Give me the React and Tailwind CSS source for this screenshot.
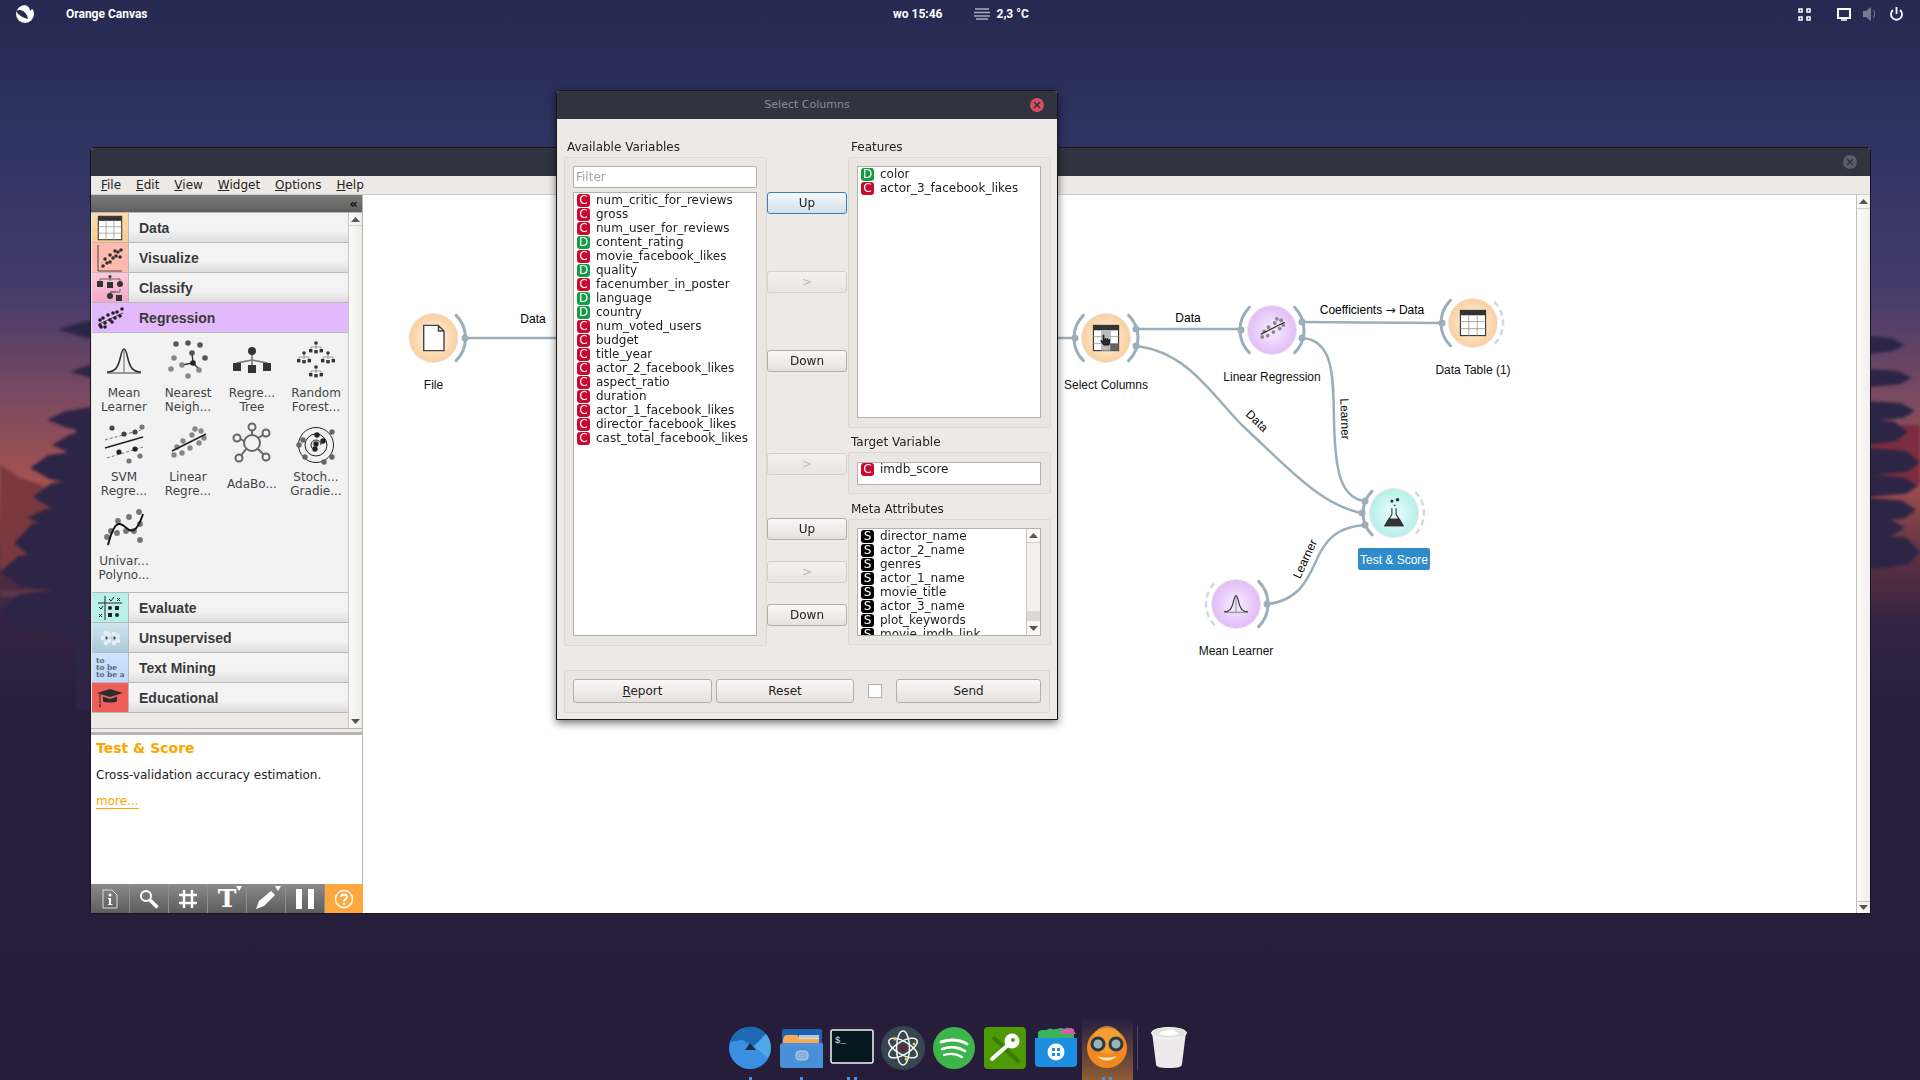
import React from "react";
import { FaHandPointer } from "react-icons/fa";

const DJ = "[font-family:'DejaVu_Sans',sans-serif]";

/* ---------- wallpaper ---------- */
const leftBranches = [[58, 330, 8], [70, 372, 8], [47, 420, 11], [52, 445, 13], [30, 468, 16], [33, 497, 17], [27, 518, 11], [14, 543, 24], [0, 572, 20], [0, 612, 22]];
const rightBranches = [[1905, 345, 9], [1912, 378, 9], [1915, 411, 10], [1908, 432, 13], [1920, 462, 14], [1918, 486, 11], [1916, 510, 12], [1905, 528, 10], [1920, 552, 18]];

function Wallpaper() {
  return (
    <svg className="absolute inset-0" width="1920" height="1080" viewBox="0 0 1920 1080">
      <defs>
        <linearGradient id="sky" x1="0" y1="0" x2="0" y2="1">
          <stop offset="0" stopColor="#262950" />
          <stop offset="0.14" stopColor="#2f3463" />
          <stop offset="0.278" stopColor="#473c6c" />
          <stop offset="0.37" stopColor="#7b4a60" />
          <stop offset="0.444" stopColor="#a25250" />
          <stop offset="0.519" stopColor="#5a2f40" />
          <stop offset="0.574" stopColor="#352443" />
          <stop offset="0.648" stopColor="#271f3c" />
          <stop offset="1" stopColor="#251d3a" />
        </linearGradient>
      </defs>
      <rect width="1920" height="1080" fill="url(#sky)" />
      <g className="blur-[1.5px]">
        <rect x="1870" y="425" width="50" height="60" fill="#7c2d40" />
        <polygon points="0,465 20,478 50,488 90,500 90,570 0,570" fill="#79393f" />
        <rect x="0" y="590" width="80" height="7" fill="#6b3a50" opacity="0.7" />
        <rect x="76" y="410" width="16" height="300" fill="#2d2545" />
        {leftBranches.map(([x, y, h]) => (
          <polygon key={y} points={`${x},${y} ${x + 18},${y - h * 0.8} 92,${y - h * 1.2} 92,${y + h * 1.2} ${x + 20},${y + h * 0.7}`} fill="#2d2545" />
        ))}
        {rightBranches.map(([x, y, h]) => (
          <polygon key={y} points={`${x},${y} ${x - 14},${y - h * 0.8} 1868,${y - h} 1868,${y + h} ${x - 12},${y + h * 0.7}`} fill="#2d2545" />
        ))}
      </g>
    </svg>
  );
}

/* ---------- small drawn icons (viewBox 40) ---------- */
const Dots = ({ pts, fill = "#777", r = 2.4 }) => pts.map(([x, y], i) => <circle key={i} cx={x} cy={y} r={r} fill={fill} />);

const GaussIcon = () => (
  <g>
    <path d="M3 32H37" stroke="#999" strokeWidth="2" />
    <path d="M20 8V32" stroke="#999" strokeWidth="1.6" />
    <path d="M3 31C11 31 14 27 16.500 16C18 9 19 8 20 8C21 8 22 9 23.500 16C26 27 29 31 37 31" fill="none" stroke="#333" strokeWidth="1.6" />
  </g>
);
const KnnIcon = () => (
  <g>
    <path d="M24 12L25 22L14 24M25 22L31 28" stroke="#333" strokeWidth="1.4" fill="none" />
    <Dots pts={[[8, 3], [20, 2], [32, 4], [24, 12], [37, 17]]} fill="#555" r="2.8" />
    <Dots pts={[[6, 17], [14, 24], [31, 29], [3, 28], [20, 35]]} fill="#888" r="2.8" />
    <circle cx="25" cy="22" r="2.8" fill="#222" />
  </g>
);
const TreeIcon = () => (
  <g fill="#333">
    <path d="M20 10V30M5 26V22L20 19L35 22V26" stroke="#777" strokeWidth="1.6" fill="none" />
    <circle cx="20" cy="10" r="4" />
    <rect x="1" y="22" width="8" height="8" />
    <rect x="16" y="24" width="8" height="8" />
    <rect x="31" y="22" width="8" height="8" />
  </g>
);
const Mini = ({ x, y }) => (
  <g fill="#333">
    <path d={`M${x} ${y}V${y + 6}M${x - 5} ${y + 7}V${y + 4}H${x + 5}V${y + 7}`} stroke="#888" strokeWidth="0.8" fill="none" />
    <circle cx={x} cy={y} r="1.8" />
    <rect x={x - 7} y={y + 6} width="3.4" height="3.4" />
    <rect x={x - 1.700} y={y + 7} width="3.4" height="3.4" />
    <rect x={x + 3.600} y={y + 6} width="3.4" height="3.4" />
  </g>
);
const ForestIcon = () => (
  <g>
    <Mini x={20} y={2} />
    <Mini x={8} y={12} />
    <Mini x={32} y={12} />
    <Mini x={20} y={26} />
  </g>
);
const SvmIcon = () => (
  <g>
    <path d="M1 23L39 12" stroke="#222" strokeWidth="1.6" />
    <path d="M1 15L37 5M3 33L39 22" stroke="#666" strokeWidth="0.9" strokeDasharray="3 2" />
    <Dots pts={[[8, 3], [20, 9], [31, 7]]} fill="#444" r="2.6" />
    <Dots pts={[[15, 27], [31, 24]]} fill="#222" r="2.6" />
    <Dots pts={[[25, 36], [36, 31], [38, 2]]} fill="#777" r="2.6" />
  </g>
);
const LinearIcon = ({ dark = "#222", fill = "#888" }) => (
  <g>
    <Dots pts={[[9, 22], [15, 16], [24, 10], [33, 6], [31, 18], [22, 23], [14, 28], [6, 30], [36, 13], [27, 4]]} fill={fill} r="2.7" />
    <path d="M4 26L38 9" stroke={dark} strokeWidth="1.7" />
  </g>
);
const AdaIcon = () => (
  <g fill="none" stroke="#666" strokeWidth="2">
    <circle cx="20" cy="18" r="8" />
    <circle cx="20" cy="2" r="3.500" />
    <circle cx="34" cy="8" r="3.500" />
    <circle cx="5" cy="13" r="3.500" />
    <circle cx="7" cy="33" r="3.500" />
    <circle cx="34" cy="32" r="3.500" />
    <path d="M20 6V10M31 10L26 13M8.500 14L12 16M9.500 30L14 24M31.500 29.500L26 24" />
  </g>
);
const SgdIcon = () => (
  <g>
    <circle cx="20" cy="20" r="17.500" fill="none" stroke="#222" strokeWidth="1" />
    <circle cx="20" cy="20" r="11" fill="none" stroke="#222" strokeWidth="1" />
    <path d="M20 25a5 5 0 1 1 5-5" fill="none" stroke="#222" strokeWidth="1" />
    <Dots pts={[[21, 10], [27, 16], [20, 19], [19, 24]]} fill="#222" r="2.7" />
    <Dots pts={[[7, 15], [3, 20], [36, 7], [9, 32], [28, 37], [36, 32]]} fill="#666" r="2.7" />
  </g>
);
const PolyIcon = () => (
  <g>
    <Dots pts={[[14, 12], [25, 8], [35, 3], [7, 22], [13, 24], [22, 22], [30, 22], [36, 15], [3, 28], [36, 31]]} fill="#777" r="2.9" />
    <path d="M4 36C7 24 11 14 16 15C22 16 24 24 30 21C35 18 37 11 39 5" fill="none" stroke="#111" strokeWidth="1.900" />
  </g>
);
const TableIcon = ({ head = "#333" }) => (
  <g>
    <rect x="2" y="2" width="36" height="36" fill="#fff" stroke="#333" strokeWidth="1.6" />
    <rect x="2" y="2" width="36" height="7" fill={head} />
    <path d="M14 9V38M26 9V38M2 18H38M2 28H38" stroke="#999" strokeWidth="1.2" />
  </g>
);

/* ---------- sidebar ---------- */
const catIcons = {
  Data: (
    <svg width="26" height="26" viewBox="0 0 40 40"><TableIcon /></svg>
  ),
  Visualize: (
    <svg width="26" height="28" viewBox="0 0 26 28">
      <path d="M1 1V27H25" fill="none" stroke="#444" strokeWidth="1" />
      <Dots pts={[[6, 22], [10, 19], [8, 15], [13, 18], [16, 14], [19, 12], [13, 11], [21, 8], [24, 6], [18, 7], [23, 13]]} fill="#333" r="1.800" />
    </svg>
  ),
  Classify: (
    <svg width="28" height="26" viewBox="0 0 28 26">
      <path d="M4 6V4H24V6M14 1V6M24 14V17H14V20M14 17H20" stroke="#666" fill="none" />
      <circle cx="14" cy="1.500" r="1.500" fill="#333" />
      <rect x="1" y="6" width="6" height="6" fill="#333" />
      <rect x="11" y="7" width="6" height="6" fill="#333" />
      <circle cx="24" cy="9" r="3" fill="#333" />
      <circle cx="14" cy="21" r="3" fill="#333" />
      <rect x="20" y="20" width="6" height="6" fill="#333" />
    </svg>
  ),
  Regression: (
    <svg width="26" height="22" viewBox="0 0 26 22">
      <path d="M1 17L25 6" stroke="#222" strokeWidth="0.800" />
      <Dots pts={[[2, 13], [5, 11], [10, 8], [15, 6], [19, 5], [24, 2], [22, 9], [17, 11], [12, 13], [7, 16], [2, 18], [7, 20], [14, 15], [3, 20]]} fill="#222" r="1.800" />
    </svg>
  ),
  Evaluate: (
    <svg width="26" height="26" viewBox="0 0 26 26">
      <path d="M8 1V25M1 8H25" stroke="#222" strokeWidth="1" fill="none" />
      <path d="M12 4L14 6L17 2M20 3L23 6M23 3L20 6M2 12L4 14L6 11M2 19L5 22M5 19L2 22" stroke="#222" fill="none" />
      <circle cx="13" cy="13" r="2" fill="#222" />
      <rect x="18" y="11" width="4" height="4" fill="#222" />
      <rect x="11" y="18" width="4" height="4" fill="#222" />
      <circle cx="20" cy="20" r="2" fill="#222" />
    </svg>
  ),
  Unsupervised: (
    <svg width="20" height="16" viewBox="0 0 20 16">
      <Dots pts={[[3, 8], [6, 3], [6, 13], [9, 5], [9, 11], [14, 4], [18, 6], [18, 11], [14, 13]]} fill="#e4eef4" r="2.400" />
      <path d="M5 8H8M6.500 6.500V9.500M13 8H16M14.500 6.500V9.500" stroke="#555" />
    </svg>
  ),
  "Text Mining": (
    <div className="flex w-[28px] flex-col whitespace-nowrap text-[7.5px] font-bold leading-[7px] text-[#55667f] [font-family:'DejaVu_Serif',serif]">
      <span>to</span>
      <span>to be</span>
      <span>to be a</span>
    </div>
  ),
  Educational: (
    <svg width="26" height="18" viewBox="0 0 26 18">
      <path d="M0 4L13 0L26 4L13 8Z" fill="#2c2c2c" />
      <path d="M6 7.500V12C6 14 20 14 20 12V7.500L13 10Z" fill="#2c2c2c" />
      <path d="M3 5V14" stroke="#2c2c2c" />
      <path d="M2 18L3 13L4 18Z" fill="#2c2c2c" />
    </svg>
  ),
};

function Category({ name, bg, active }) {
  return (
    <div className={`flex h-[30px] shrink-0 border-b border-[#b9b9b9] ${active ? "bg-[#e2b9fa]" : "bg-gradient-to-b from-[#f3f3f3] from-60% to-[#dedede]"}`}>
      <div className={`flex w-[37px] shrink-0 items-center justify-center ${bg} ${active ? "" : "border-r border-[#b9b9b9]"}`}>{catIcons[name]}</div>
      <span className="ml-[10px] self-center pt-[1px] text-[14px] font-bold text-[#3a3a3a] [font-family:'Liberation_Sans',sans-serif]">{name}</span>
    </div>
  );
}

const tools = [
  [["Mean", "Learner"], GaussIcon],
  [["Nearest", "Neigh..."], KnnIcon],
  [["Regre...", "Tree"], TreeIcon],
  [["Random", "Forest..."], ForestIcon],
  [["SVM", "Regre..."], SvmIcon],
  [["Linear", "Regre..."], LinearIcon],
  [["AdaBo..."], AdaIcon],
  [["Stoch...", "Gradie..."], SgdIcon],
  [["Univar...", "Polyno..."], PolyIcon],
];

function Tool({ lines, Icon }) {
  return (
    <div className="flex h-[84px] w-[64px] flex-col items-center pt-[8px]">
      <svg width="40" height="40" viewBox="0 0 40 40" className="shrink-0 overflow-visible"><Icon /></svg>
      <div className="mt-[5px] flex h-[28px] flex-col justify-center text-center text-[12px] leading-[14px] whitespace-nowrap text-[#444]">
        {lines.map((l) => <span key={l}>{l}</span>)}
      </div>
    </div>
  );
}

const Arrow = ({ down, color = "#555" }) => (
  <svg width="9" height="5" viewBox="0 0 9 5"><path d={down ? "M0 0H9L4.500 5Z" : "M0 5H9L4.500 0Z"} fill={color} /></svg>
);

function Sidebar() {
  return (
    <div className={`flex h-full w-[272px] shrink-0 flex-col border-r border-[#b5b5b5] bg-[#edeae6] ${DJ}`}>
      <div className="flex h-[17px] shrink-0 items-center justify-end bg-gradient-to-b from-[#7b7b7b] to-[#5f5f5f] pr-[4px]">
        <span className="text-[13px] font-bold leading-none text-[#111]">«</span>
      </div>
      <div className="h-[1px] bg-[#b5b5b5]" />
      <div className="flex h-[516px] shrink-0 border-b border-[#b5b5b5]">
        <div className="ml-[1px] flex w-[257px] shrink-0 flex-col border-r border-[#c9c6c2]">
          <Category name="Data" bg="bg-gradient-to-b from-[#fddcaf] to-[#fbca8c]" />
          <Category name="Visualize" bg="bg-[#ffb9ad]" />
          <Category name="Classify" bg="bg-gradient-to-b from-[#fdc8dc] to-[#f4aac6]" />
          <Category name="Regression" active bg="" />
          <div className="flex h-[260px] shrink-0 flex-wrap content-start border-b border-[#b9b9b9] bg-[#f2f2f2]">
            {tools.map(([l, I]) => <Tool key={l[0]} lines={l} Icon={I} />)}
          </div>
          <Category name="Evaluate" bg="bg-[#b9f1ea]" />
          <Category name="Unsupervised" bg="bg-gradient-to-b from-[#cfe5f1] to-[#a9c9d9]" />
          <Category name="Text Mining" bg="bg-gradient-to-b from-[#cde3fc] to-[#c0d8f6]" />
          <Category name="Educational" bg="bg-[#ee5f5a]" />
        </div>
        <div className="flex w-[13px] shrink-0 flex-col items-center justify-between bg-gradient-to-r from-[#fbfaf8] to-[#f0eeeb] pb-[4px]">
          <div className="flex h-[13px] w-full items-center justify-center border-b border-[#d5d2ce]"><Arrow /></div>
          <Arrow down />
        </div>
      </div>
      <div className="h-[6px] shrink-0 border-b-[3px] border-[#b5b5b5] bg-[#edeae6]" />
      <div className="flex h-[149px] shrink-0 flex-col bg-white pl-[5px] pt-[5px]">
        <span className="text-[14px] font-bold leading-[17px] text-[#ffa500]">Test &amp; Score</span>
        <span className="mt-[11px] text-[12px] leading-[15px] text-[#222]">Cross-validation accuracy estimation.</span>
        <span className="mt-[12px] self-start border-b border-[#ffa500] text-[12px] leading-[13px] text-[#ffa500]">more...</span>
      </div>
      <BottomToolbar />
    </div>
  );
}

function BottomToolbar() {
  const cell = "flex h-full w-[39px] items-center justify-center border-r border-[#8f8f8f]";
  return (
    <div className="mr-[-1px] flex h-[29px] flex-1 bg-gradient-to-b from-[#8a8a8a] to-[#5d5d5d]">
      <div className={cell}>
        <svg width="16" height="20" viewBox="0 0 16 20" fill="none" stroke="#ddd"><path d="M1 1H10L15 6V19H1Z" /><circle cx="8" cy="6" r="1.500" fill="#fff" stroke="none" /><path d="M6 9H9V15H10.500V16H6V15H7V10H6Z" fill="#fff" stroke="none" /></svg>
      </div>
      <div className={cell}>
        <svg width="20" height="20" viewBox="0 0 20 20" fill="none" stroke="#fff"><circle cx="7" cy="7" r="5" strokeWidth="2" /><path d="M11 11L18.500 18.500" strokeWidth="3.500" /></svg>
      </div>
      <div className={cell}>
        <svg width="20" height="20" viewBox="0 0 20 20" stroke="#fff" strokeWidth="2.500"><path d="M6 1V19M14 1V19M1 6H19M1 14H19" /></svg>
      </div>
      <div className={`${cell} relative`}>
        <span className="text-[25px] font-bold leading-none text-white [font-family:'DejaVu_Serif',serif]">T</span>
        <svg className="absolute right-[4px] top-[2px]" width="6" height="5" viewBox="0 0 6 5"><path d="M0 0H6L3 5Z" fill="#fff" /></svg>
      </div>
      <div className={`${cell} relative`}>
        <svg width="22" height="22" viewBox="0 0 22 22" fill="#fff"><path d="M1 21L4 13L16 3L20 7L9 18Z" /></svg>
        <svg className="absolute right-[4px] top-[2px]" width="6" height="5" viewBox="0 0 6 5"><path d="M0 0H6L3 5Z" fill="#fff" /></svg>
      </div>
      <div className={`${cell} gap-[6px]`}>
        <div className="h-[20px] w-[6px] bg-white" />
        <div className="h-[20px] w-[6px] bg-white" />
      </div>
      <div className="flex h-full w-[38px] items-center justify-center bg-[#ffa63d]">
        <svg width="20" height="20" viewBox="0 0 20 20" fill="none" stroke="#fff"><circle cx="10" cy="10" r="8.500" strokeWidth="1.600" /><path d="M7 8C7 4.500 13 4.500 13 8C13 10 10 10 10 12.500" strokeWidth="2" /><circle cx="10" cy="15" r="1.200" fill="#fff" stroke="none" /></svg>
      </div>
    </div>
  );
}

/* ---------- canvas ---------- */
const pol = (cx, cy, r, a) => [cx + r * Math.cos((a * Math.PI) / 180), cy + r * Math.sin((a * Math.PI) / 180)];
const arc = (cx, cy, r, a1, a2) => {
  const [x1, y1] = pol(cx, cy, r, a1);
  const [x2, y2] = pol(cx, cy, r, a2);
  return `M${x1} ${y1}A${r} ${r} 0 0 1 ${x2} ${y2}`;
};

const O = ["#fff0df", "#fbcf9c"];
const P = ["#f3e2fd", "#e3bcf8"];
const T = ["#dffaf7", "#b5efea"];

const SelectIcon = () => (
  <g>
    <TableIcon />
    <rect x="14" y="9" width="12" height="29" fill="#bbb" />
    <rect x="26" y="28" width="12" height="10" fill="#666" />
    <FaHandPointer x="11" y="15" width="26" height="26" color="#222" />
  </g>
);
const FileIcon = () => (
  <path d="M6 2H27L35 10V38H6Z M27 2V10H35" fill="#fff" stroke="#444" strokeWidth="2" />
);
const FlaskIcon = () => (
  <g fill="#333">
    <path d="M16 14H17V22L7 38H33L23 22V14H24V14" stroke="#333" strokeWidth="1.600" fill="none" />
    <path d="M12 28H28L34 39H6Z" />
    <circle cx="17" cy="3" r="2.200" />
    <circle cx="25" cy="1" r="2.600" />
    <circle cx="21" cy="9" r="1.200" />
  </g>
);

const nodes = [
  { x: 433.5, y: 338, c: O, icon: FileIcon, label: "File", right: "solid", ly: 385 },
  { x: 1106, y: 338, c: O, icon: SelectIcon, label: "Select Columns", left: "solid", right: "solid", ly: 385 },
  { x: 1272, y: 330, c: P, icon: () => <LinearIcon />, label: "Linear Regression", left: "solid", right: "solid", ly: 377 },
  { x: 1473, y: 323, c: O, icon: () => <TableIcon />, label: "Data Table (1)", left: "solid", right: "dash", ly: 370 },
  { x: 1394, y: 513, c: T, icon: FlaskIcon, label: "Test & Score", left: "solid", right: "dash", selected: true, ly: 559 },
  { x: 1236, y: 604, c: P, icon: GaussIcon, label: "Mean Learner", left: "dash", right: "solid", ly: 651 },
];

const anchors = [[465, 338], [1075, 338], [1136, 329], [1136, 346], [1241, 330], [1302, 322], [1302, 338], [1442, 323], [1365, 501], [1362, 513], [1365, 525], [1267, 604]];

const wires = [
  "M465 338H560",
  "M1050 338H1075",
  "M1136 329H1241",
  "M1302 322L1442 323",
  "M1136 346C1190 352 1215 400 1245 428C1285 465 1320 505 1362 513",
  "M1302 338C1335 340 1333 380 1334 420C1335 470 1340 498 1365 501",
  "M1267 604C1310 600 1312 560 1325 545C1335 530 1350 526 1365 525",
];

function Canvas() {
  return (
    <div className="relative h-full flex-1 overflow-hidden bg-white [font-family:'Liberation_Sans',sans-serif]">
      <svg className="absolute inset-0" width="1493" height="718" viewBox="363 195 1493 718">
        <defs>
          {[["gO", O], ["gP", P], ["gT", T]].map(([id, c]) => (
            <radialGradient key={id} id={id}>
              <stop offset="0.25" stopColor={c[0]} />
              <stop offset="1" stopColor={c[1]} />
            </radialGradient>
          ))}
        </defs>
        {wires.map((d) => <path key={d} d={d} fill="none" stroke="#9caeb9" strokeWidth="2.500" />)}
        {nodes.map((n) => {
          const id = n.c === O ? "gO" : n.c === P ? "gP" : "gT";
          const Ic = n.icon;
          const small = n.label === "Test & Score";
          return (
            <g key={n.label}>
              <circle cx={n.x} cy={n.y} r="25" fill="#e9e9e9" />
              <circle cx={n.x} cy={n.y} r="24" fill={`url(#${id})`} />
              <svg x={n.x - 14} y={n.y - 14} width="28" height="28" viewBox="0 0 40 40" overflow="visible"><Ic /></svg>
              {n.right === "solid" && <path d={arc(n.x, n.y, 32, -45, 45)} fill="none" stroke="#9caeb9" strokeWidth="3" strokeLinecap="round" />}
              {n.right === "dash" && <path d={arc(n.x, n.y, 30, -45, 45)} fill="none" stroke="#cfdadf" strokeWidth="2.500" strokeDasharray="6 4" />}
              {n.left === "solid" && <path d={arc(n.x, n.y, small ? 31 : 32, 135, 225)} fill="none" stroke="#9caeb9" strokeWidth="3" strokeLinecap="round" />}
              {n.left === "dash" && <path d={arc(n.x, n.y, 30, 135, 225)} fill="none" stroke="#cfdadf" strokeWidth="2.500" strokeDasharray="6 4" />}
            </g>
          );
        })}
        {anchors.map(([x, y]) => <circle key={`${x}-${y}`} cx={x} cy={y} r="3.500" fill="#9caeb9" />)}
      </svg>
      {nodes.map((n) => (
        <div
          key={n.label}
          className={`absolute -translate-x-1/2 -translate-y-1/2 whitespace-nowrap text-[12px] leading-[14px] ${n.selected ? "rounded-[2px] bg-[#2f8ccb] px-[2px] pb-[3px] pt-[5px] text-white" : "text-[#111]"}`}
          style={{ left: n.x - 363, top: n.ly - 195 }}
        >
          {n.label}
        </div>
      ))}
      <span className="absolute left-[170px] top-[124px] -translate-x-1/2 -translate-y-1/2 text-[12px] text-black">Data</span>
      <span className="absolute left-[825px] top-[123px] -translate-x-1/2 -translate-y-1/2 text-[12px] text-black">Data</span>
      <span className="absolute left-[1009px] top-[115px] -translate-x-1/2 -translate-y-1/2 whitespace-nowrap text-[12px] text-black">Coefficients <span className="[font-family:'DejaVu_Sans',sans-serif]">→</span> Data</span>
      <span className="absolute left-[894px] top-[226px] -translate-x-1/2 -translate-y-1/2 rotate-[44deg] text-[12px] text-black">Data</span>
      <span className="absolute left-[982px] top-[224px] -translate-x-1/2 -translate-y-1/2 rotate-[88deg] text-[12px] text-black">Learner</span>
      <span className="absolute left-[942px] top-[364px] -translate-x-1/2 -translate-y-1/2 rotate-[-65deg] text-[12px] text-black">Learner</span>
    </div>
  );
}

function MainWindow() {
  const menu = [["F", "ile"], ["E", "dit"], ["V", "iew"], ["W", "idget"], ["O", "ptions"], ["H", "elp"]];
  return (
    <div className="absolute left-[90px] top-[147px] flex h-[767px] w-[1781px] flex-col overflow-hidden rounded-t-[3px] border border-[#15171d] bg-white">
      <div className="flex h-[28px] shrink-0 items-center justify-end bg-[#2f343f] pr-[13px]">
        <div className="flex h-[14px] w-[14px] items-center justify-center rounded-full bg-[#5a5e68]">
          <svg width="8" height="8" viewBox="0 0 8 8" stroke="#2f343f" strokeWidth="1.500"><path d="M1 1L7 7M7 1L1 7" /></svg>
        </div>
      </div>
      <div className={`flex h-[19px] shrink-0 items-center gap-[15px] border-b border-[#cfccc8] bg-[#edeae6] pl-[10px] text-[12px] text-[#222] ${DJ}`}>
        {menu.map(([a, b]) => (
          <span key={a}><span className="underline">{a}</span>{b}</span>
        ))}
      </div>
      <div className="flex min-h-0 flex-1">
        <Sidebar />
        <Canvas />
        <div className="flex h-full w-[14px] shrink-0 flex-col items-center justify-between border-l border-[#c3c0bc] bg-gradient-to-r from-[#fcfbfa] to-[#f1efec]">
          <div className="flex h-[14px] w-full items-center justify-center border-b border-[#d5d2ce]"><Arrow /></div>
          <div className="flex h-[12px] w-full items-center justify-center border-t border-[#c3c0bc]"><Arrow down /></div>
        </div>
      </div>
    </div>
  );
}

/* ---------- dialog ---------- */
const badgeColor = { C: "bg-[#c9082f]", D: "bg-[#169b45]", S: "bg-black" };

function VarRow({ t, name, cls = "" }) {
  return (
    <div className={`flex h-[14px] shrink-0 items-center ${cls}`}>
      <span className={`ml-[3px] flex h-[13px] w-[13px] shrink-0 items-center justify-center rounded-[3px] text-[12px] leading-none text-white ${badgeColor[t]}`}>{t}</span>
      <span className="ml-[6px] whitespace-nowrap text-[12px] leading-[14px] text-[#222]">{name}</span>
    </div>
  );
}

const avail = [
  ["C", "num_critic_for_reviews"], ["C", "gross"], ["C", "num_user_for_reviews"], ["D", "content_rating"], ["C", "movie_facebook_likes"], ["D", "quality"],
  ["C", "facenumber_in_poster"], ["D", "language"], ["D", "country"], ["C", "num_voted_users"], ["C", "budget"], ["C", "title_year"], ["C", "actor_2_facebook_likes"],
  ["C", "aspect_ratio"], ["C", "duration"], ["C", "actor_1_facebook_likes"], ["C", "director_facebook_likes"], ["C", "cast_total_facebook_likes"],
];
const metas = ["director_name", "actor_2_name", "genres", "actor_1_name", "movie_title", "actor_3_name", "plot_keywords", "movie_imdb_link"];

function Btn({ children, cls = "", disabled, primary }) {
  return (
    <div
      className={`flex h-[22px] w-full items-center justify-center rounded-[3px] border text-[12px] ${cls} ${
        primary
          ? "border-[#3d7fb3] bg-gradient-to-b from-[#f6f9fb] to-[#d2e0ea] text-[#222]"
          : disabled
          ? "border-[#d3d0cb] bg-gradient-to-b from-[#f3f1ee] to-[#e9e6e2] text-[#b8b6b2]"
          : "border-[#b3b0ab] bg-gradient-to-b from-[#f9f8f7] to-[#e5e2de] text-[#222]"
      }`}
    >
      {children}
    </div>
  );
}

const Group = ({ cls, children }) => <div className={`rounded-[2px] border border-[#dcd9d4] bg-[#eae7e3] ${cls}`}>{children}</div>;
const Label = ({ cls = "", children }) => <div className={`h-[15px] pl-[3px] text-[12px] leading-[17px] text-[#222] ${cls}`}>{children}</div>;
const ListBox = ({ cls, children }) => <div className={`flex flex-col overflow-hidden border border-[#b4b1ac] bg-white ${cls}`}>{children}</div>;

function Dialog() {
  return (
    <div className={`absolute left-[556px] top-[90px] flex h-[630px] w-[502px] flex-col overflow-hidden rounded-t-[3px] border border-[#15171d] bg-[#edeae6] shadow-[0_3px_8px_rgba(0,0,0,0.55)] ${DJ}`}>
      <div className="relative flex h-[28px] shrink-0 items-center justify-center bg-[#2f343f] text-[11px] text-[#8a8e96]">
        Select Columns
        <div className="absolute right-[13px] top-[7px] flex h-[14px] w-[14px] items-center justify-center rounded-full bg-[#d6515c]">
          <svg width="8" height="8" viewBox="0 0 8 8" stroke="#2f343f" strokeWidth="1.500"><path d="M1 1L7 7M7 1L1 7" /></svg>
        </div>
      </div>
      <div className="flex flex-1 flex-col px-[7px]">
        <div className="mt-[20px] flex">
          <div className="w-[203px] shrink-0">
            <Label>Available Variables</Label>
            <Group cls="mt-[3px] flex h-[489px] flex-col gap-[4px] pl-[8px] pr-[9px] pt-[8px]">
              <div className="flex h-[22px] items-center rounded-[2px] border border-[#b4b1ac] bg-white pl-[2px] text-[12px] text-[#a5a5a5]">Filter</div>
              <ListBox cls="h-[444px]">
                {avail.map(([t, n]) => <VarRow key={n} t={t} name={n} />)}
              </ListBox>
            </Group>
          </div>
          <div className="w-[80px] shrink-0 pt-[53px]">
            <Btn primary>Up</Btn>
            <Btn disabled cls="mt-[57px]">&gt;</Btn>
            <Btn cls="mt-[57px]">Down</Btn>
            <Btn disabled cls="mt-[81px]">&gt;</Btn>
            <Btn cls="mt-[43px]">Up</Btn>
            <Btn disabled cls="mt-[21px]">&gt;</Btn>
            <Btn cls="mt-[21px]">Down</Btn>
          </div>
          <div className="ml-[1px] w-[203px] shrink-0">
            <Label>Features</Label>
            <Group cls="mt-[3px] h-[271px] pl-[8px] pr-[9px] pt-[8px]">
              <ListBox cls="h-[252px]">
                <VarRow t="D" name="color" />
                <VarRow t="C" name="actor_3_facebook_likes" />
              </ListBox>
            </Group>
            <Label cls="mt-[6px]">Target Variable</Label>
            <Group cls="mt-[3px] h-[42px] pl-[8px] pr-[9px] pt-[9px]">
              <ListBox cls="h-[23px]">
                <VarRow t="C" name="imdb_score" cls="-mt-[1px]" />
              </ListBox>
            </Group>
            <Label cls="mt-[7px]">Meta Attributes</Label>
            <Group cls="mt-[3px] h-[126px] pl-[8px] pr-[9px] pt-[8px]">
              <div className="flex h-[108px] overflow-hidden border border-[#b4b1ac] bg-white">
                <div className="flex flex-1 flex-col overflow-hidden">
                  {metas.map((n) => <VarRow key={n} t="S" name={n} />)}
                </div>
                <div className="flex w-[14px] shrink-0 flex-col items-center border-l border-[#c9c6c2] bg-[#f3f1ee]">
                  <div className="flex h-[14px] w-full items-center justify-center border-b border-[#d5d2ce] bg-[#f9f8f7]"><Arrow /></div>
                  <div className="mt-[68px] h-[10px] w-full bg-[#dcdad7]" />
                  <div className="flex h-[14px] w-full items-center justify-center bg-[#f9f8f7]"><Arrow down /></div>
                </div>
              </div>
            </Group>
          </div>
        </div>
        <Group cls="mt-[24px] flex h-[43px] items-start px-[8px] pt-[8px]">
          <Btn cls="!h-[24px] !w-[139px] shrink-0"><span><span className="underline">R</span>eport</span></Btn>
          <Btn cls="!h-[24px] !w-[138px] ml-[4px] shrink-0">Reset</Btn>
          <div className="ml-[14px] mt-[5px] h-[14px] w-[14px] shrink-0 border border-[#b4b1ac] bg-white" />
          <Btn cls="!h-[24px] !w-[145px] ml-[14px] shrink-0">Send</Btn>
        </Group>
      </div>
    </div>
  );
}

/* ---------- dock ---------- */
const D = ({ children, dots = 0, active }) => (
  <div className="relative flex h-[54px] w-[44px] shrink-0 items-start">
    {active && <div className="absolute left-[-3px] top-[-6px] h-[60px] w-[51px] bg-gradient-to-b from-[#2a2040] to-[#8f5c30]" />}
    <svg className="relative" width="44" height="44" viewBox="0 0 44 44">{children}</svg>
    {dots > 0 && (
      <div className="absolute bottom-[0px] left-0 flex w-full justify-center gap-[4px]">
        {Array.from({ length: dots }).map((_, i) => <div key={i} className="h-[3px] w-[3px] bg-[#4f8fe6]" />)}
      </div>
    )}
  </div>
);

function Dock() {
  return (
    <div className="relative flex items-start gap-[7px] pl-[728px]">
      <D dots={1}>
        <circle cx="22" cy="22" r="21" fill="#3b8fe3" />
        <path d="M2 16A21 21 0 0 1 38 8L26 20L14 14Z" fill="#1f68b4" />
        <path d="M26 20L38 8A21 21 0 0 1 40 32C34 26 30 24 26 20Z" fill="#4fa8e8" />
        <path d="M17 24L22 17L28 24Z" fill="#1e2b3f" />
      </D>
      <D dots={1}>
        <rect x="3" y="3" width="40" height="24" fill="#1d64b0" rx="2" />
        <path d="M4 14C4 11 6 9 8 9H18L21 12H40V24H4Z" fill="#f5a855" />
        <rect x="20" y="9" width="20" height="4" fill="#f5f0e8" opacity="0.7" />
        <rect x="1" y="17" width="44" height="25" rx="3" fill="#4a90d9" />
        <rect x="17" y="25" width="12" height="9" rx="3.500" fill="#88b2de" stroke="#b9d2ea" />
      </D>
      <D dots={2}>
        <rect x="1" y="4" width="42" height="33" rx="2" fill="#06181f" stroke="#f4f4f4" strokeWidth="1.500" />
        <text x="5" y="17" fontSize="9" fill="#dfe8ea" fontFamily="Liberation Mono">$_</text>
      </D>
      <D>
        <circle cx="22" cy="22" r="22" fill="#37474f" />
        <g fill="none" stroke="#f4f4f4" strokeWidth="1.500">
          <ellipse cx="22" cy="22" rx="16" ry="6.500" transform="rotate(30 22 22)" />
          <ellipse cx="22" cy="22" rx="16" ry="6.500" transform="rotate(-30 22 22)" />
          <ellipse cx="22" cy="22" rx="6.500" ry="17" />
        </g>
        <circle cx="22" cy="22" r="3" fill="#7b1a3a" />
        <circle cx="14" cy="13" r="1.500" fill="#e8c84b" />
        <circle cx="33" cy="18" r="1.500" fill="#e8c84b" />
        <circle cx="25" cy="33" r="1.500" fill="#e8c84b" />
      </D>
      <D>
        <circle cx="22" cy="22" r="21" fill="#3eb54a" />
        <g fill="none" stroke="#fff" strokeLinecap="round">
          <path d="M9 16C18 13 28 14 35 18" strokeWidth="3" />
          <path d="M10 23C18 20 27 21 33 25" strokeWidth="2.600" />
          <path d="M12 29C18 27 25 28 30 31" strokeWidth="2.200" />
        </g>
      </D>
      <D>
        <rect x="1" y="1" width="42" height="42" rx="4" fill="#4e9a06" />
        <path d="M10 11L36 36" stroke="#3d7a05" strokeWidth="4" />
        <circle cx="29" cy="15" r="7.500" fill="#fff" />
        <circle cx="30" cy="14" r="2" fill="#4e9a06" />
        <path d="M25 19L9 33" stroke="#fff" strokeWidth="4" strokeLinecap="round" />
      </D>
      <D>
        <path d="M4 6C8 2 12 6 16 2C20 6 26 0 30 3C34 0 38 4 40 3V12H4Z" fill="#3bb35a" />
        <path d="M26 4L38 2L42 8H28Z" fill="#d85db0" />
        <path d="M1 12H43V38C43 40 41 41 39 41H5C3 41 1 40 1 38Z" fill="#1c8fe3" />
        <circle cx="22" cy="26" r="8.500" fill="#fff" />
        <path d="M18 22H21V25H18ZM23 22H26V25H23ZM18 27H21V30H18ZM23 27H26V30H23Z" fill="#1c8fe3" />
      </D>
      <D dots={2} active>
        <circle cx="22" cy="22" r="20" fill="#f08a20" />
        <circle cx="22" cy="14" r="14" fill="#f8a838" opacity="0.7" />
        <circle cx="13" cy="18" r="6" fill="#9ab3b8" stroke="#2a3a40" strokeWidth="3" />
        <circle cx="31" cy="18" r="6" fill="#9ab3b8" stroke="#2a3a40" strokeWidth="3" />
        <path d="M12 30C18 36 26 36 32 30C26 32 18 32 12 30Z" fill="#fbe8c0" />
      </D>
      <div className="ml-[1px] h-[44px] w-[1px] bg-[#4c4660]" />
      <svg className="ml-[2px]" width="44" height="44" viewBox="0 0 44 44">
        <path d="M5 6H39L35 38C35 41 31 42 22 42C13 42 9 41 9 38Z" fill="#eceaea" />
        <ellipse cx="22" cy="7" rx="17.500" ry="5.500" fill="#dfe3da" stroke="#fafafa" />
        <path d="M12 8C14 4 18 6 21 4C26 3 30 6 32 8C26 10 18 10 12 8Z" fill="#fff" />
      </svg>
    </div>
  );
}

/* ---------- top panel ---------- */
function TopPanel() {
  return (
    <div className="relative flex h-[28px] shrink-0 items-center text-[12px] font-bold text-white [font-family:Roboto,sans-serif]">
      <svg className="ml-[15px] shrink-0" width="20" height="20" viewBox="0 0 20 20">
        <circle cx="10" cy="10" r="9" fill="#fff" />
        <path d="M1 7C6 4 12 8 13 15C9 14 4 12 1 7ZM10 1C13 2 15 4 15 7L18 4C16 2 13 1 10 1Z" fill="#262950" />
      </svg>
      <span className="ml-[31px] w-[80px] whitespace-nowrap">Orange Canvas</span>
      <span className="ml-[747px] whitespace-nowrap">wo 15:46</span>
      <svg className="ml-[31px]" width="16" height="12" viewBox="0 0 16 12" stroke="#aab" strokeWidth="1.500"><path d="M1 1H15M0 4.500H16M0 8H16M2 11H14" /></svg>
      <span className="ml-[7px] whitespace-nowrap">2,3 °C</span>
      <div className="ml-auto flex items-center pr-[17px]">
        <svg width="13" height="13" viewBox="0 0 13 13" fill="none" stroke="#fff" strokeWidth="1.500"><path d="M1 1H4V4H1ZM9 1H12V4H9ZM1 9H4V12H1ZM9 9H12V12H9Z" /></svg>
        <svg className="ml-[26px]" width="14" height="13" viewBox="0 0 14 13" fill="none" stroke="#fff" strokeWidth="2"><path d="M1 1H13V10H1Z" /><path d="M4 12H10" strokeWidth="1.500" /></svg>
        <svg className="ml-[12px]" width="15" height="14" viewBox="0 0 15 14" fill="#7a7a90"><path d="M0 4H3L8 0V14L3 10H0Z" /><path d="M10 3C12 5 12 9 10 11" fill="none" stroke="#7a7a90" /></svg>
        <svg className="ml-[12px]" width="13" height="14" viewBox="0 0 13 14" fill="none" stroke="#fff" strokeWidth="1.800"><path d="M6.500 0V7M3 3A5.500 5.500 0 1 0 10 3" /></svg>
      </div>
    </div>
  );
}

export default function App() {
  return (
    <div className="relative flex h-[1080px] w-[1920px] flex-col overflow-hidden bg-[#251d3a]">
      <Wallpaper />
      <TopPanel />
      <div className="flex-1" />
      <Dock />
      <MainWindow />
      <Dialog />
    </div>
  );
}
